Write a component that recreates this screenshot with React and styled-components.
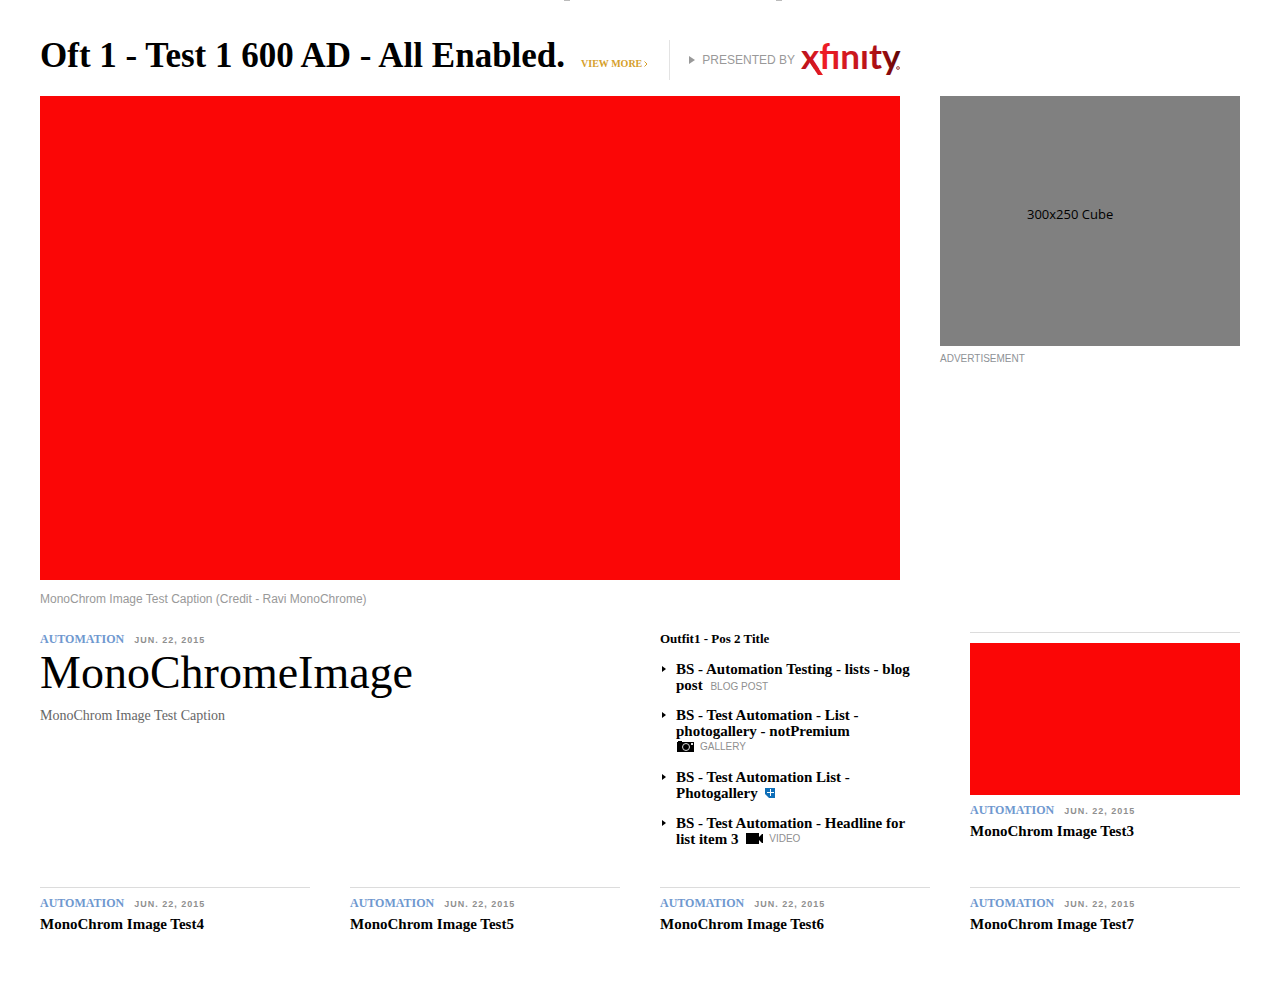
import React from 'react';
import styled, { createGlobalStyle } from 'styled-components';

const serif = 'Georgia, "Liberation Serif", serif';
const sans = 'Arial, "Liberation Sans", sans-serif';

const GlobalStyle = createGlobalStyle`
  *, *::before, *::after { box-sizing: border-box; }
  body { margin: 0; background: #fff; color: #000; font-family: ${serif}; }
  h1, h2, h3, p, ul, figure { margin: 0; padding: 0; }
  ul { list-style: none; }
  a { color: inherit; text-decoration: none; }
  svg { flex: none; }
`;

const Page = styled.div`
  padding: 0 40px 60px;
`;

const TopEdge = styled.div`
  display: flex;
  justify-content: center;
  gap: 206px;
  height: 40px;
  padding-left: 66px;
`;

const EdgeMark = styled.span`
  width: 6px;
  height: 1px;
  background: #bbb;
`;

const Header = styled.header`
  display: flex;
  align-items: center;
  height: 40px;
  margin-bottom: 16px;
  white-space: nowrap;
`;

const TitleGroup = styled.div`
  display: flex;
  align-items: baseline;
  gap: 16px;
  padding: 0 21px 8px 0;
`;

const Title = styled.h1`
  font-size: 35px;
  line-height: 32px;
  font-weight: 700;
`;

const ViewMore = styled.a`
  font-size: 10px;
  font-weight: 700;
  color: #d6a02b;
`;

const Chevron = styled.svg`
  margin-left: 2px;
`;

const Sponsor = styled.a`
  display: flex;
  align-items: center;
  height: 40px;
  padding-left: 19px;
  border-left: 1px solid #e3e3e3;
  font: 12px/14px ${sans};
  color: #999;
`;

const SponsorLabel = styled.span`
  margin: 0 6px 0 7px;
`;

const Logo = styled.svg`
  overflow: visible;
`;

const Lead = styled.section`
  display: grid;
  grid-template-columns: minmax(0, 1fr) 300px;
  gap: 40px;
  align-items: start;
  margin-bottom: 26px;
`;

const Photo = styled.div`
  width: 100%;
  aspect-ratio: ${(p) => p.$ratio};
  background: #fb0606;
`;

const Credit = styled.figcaption`
  margin-top: 12px;
  font: 12px/14px ${sans};
  color: #999;
`;

const AdCube = styled.div`
  height: 250px;
  padding: 109px 0 0 87px;
  background: #808080;
  font: 13px/18px "Open Sans", sans-serif;
`;

const AdLabel = styled.p`
  margin-top: 6px;
  font: 10px/14px ${sans};
  color: #8e9296;
`;

const Grid = styled.section`
  display: grid;
  grid-template-columns: repeat(4, minmax(0, 1fr));
  column-gap: 40px;
`;

const StoryRow = styled(Grid)`
  margin-bottom: 40px;
`;

const Feature = styled.article`
  grid-column: span 2;
`;

const Meta = styled.p`
  display: flex;
  align-items: baseline;
  gap: 10px;
  font-size: 12px;
  line-height: 14px;
  font-weight: 700;
`;

const Category = styled.a`
  color: #6f98cf;
`;

const DateText = styled.time`
  font: 700 9px/14px ${sans};
  letter-spacing: 1px;
  color: #8f8f8f;
`;

const FeatureTitle = styled.h2`
  margin-top: 1px;
  font-size: 46px;
  line-height: 50px;
  font-weight: 400;
`;

const Summary = styled.p`
  margin-top: 10px;
  font-size: 14px;
  line-height: 16px;
  color: #666;
`;

const ListTitle = styled.h2`
  font-size: 13px;
  line-height: 14px;
  margin-bottom: 15px;
`;

const LinkList = styled.ul`
  display: grid;
  gap: 14px;
`;

const Item = styled.li`
  display: flex;
  gap: 10px;
  padding: 0 12px 0 2px;
  font-size: 15px;
  line-height: 16px;
  font-weight: 700;
`;

const ItemArrow = styled.svg`
  margin-top: 5px;
`;

const ItemLink = styled.a`
  padding-right: 3px;
`;

const Tag = styled.span`
  display: inline-flex;
  align-items: center;
  gap: 6px;
  height: 12px;
  margin-left: 1px;
  white-space: nowrap;
  font: 10px/12px ${sans};
  color: #8f8f8f;
`;

const Card = styled.article`
  border-top: 1px solid #dcdcdc;
  padding-top: ${(p) => (p.$photo ? '10px' : '8px')};
`;

const CardPhoto = styled(Photo)`
  margin-bottom: 8px;
`;

const CardTitle = styled.h3`
  margin-top: 5px;
  font-size: 15px;
  line-height: 16px;
`;

function StoryMeta() {
  return (
    <Meta>
      <Category href="#automation">AUTOMATION</Category>
      <DateText dateTime="2015-06-22">JUN. 22, 2015</DateText>
    </Meta>
  );
}

function Story({ title, photo }) {
  return (
    <Card $photo={photo}>
      {photo && <CardPhoto $ratio="270 / 152" role="img" aria-label={title} />}
      <StoryMeta />
      <CardTitle><a href="#story">{title}</a></CardTitle>
    </Card>
  );
}

function XfinityLogo() {
  return (
    <Logo width="104" height="34" viewBox="0 0 104 34" role="img" aria-label="xfinity">
      <defs>
        <linearGradient id="brand" gradientUnits="userSpaceOnUse" x1="0" y1="0" x2="98" y2="0">
          <stop offset="0" stopColor="#b5121b" />
          <stop offset="0.24" stopColor="#ee1c25" />
          <stop offset="0.6" stopColor="#c4161c" />
          <stop offset="0.82" stopColor="#a50d12" />
          <stop offset="1" stopColor="#5e0507" />
        </linearGradient>
      </defs>
      <text x="0" y="26" fontFamily="Lato, sans-serif" fontSize="35" fontWeight="700" fill="url(#brand)">xfınıty</text>
      <path d="M7 17H12L22 32H17Z" fill="url(#brand)" />
      <circle cx="97" cy="25" r="1.5" fill="#e3b5b5" stroke="#a86060" strokeWidth="1" />
    </Logo>
  );
}

function CameraIcon() {
  return (
    <svg width="17" height="11" viewBox="0 0 17 11" aria-hidden="true">
      <path d="M0 1H1V0H5V1H17V11H0Z" fill="#000" />
      <circle cx="9" cy="6" r="3.5" fill="none" stroke="#ddd" />
      <path d="M14 2H16V4H14Z" fill="#ddd" />
    </svg>
  );
}

function VideoIcon() {
  return (
    <svg width="17" height="11" viewBox="0 0 17 11" aria-hidden="true">
      <path d="M0 0H13V4L16 1H17V10H16L13 7V11H0Z" fill="#000" />
    </svg>
  );
}

function PremiumIcon() {
  return (
    <svg width="10" height="10" viewBox="0 0 10 10" aria-hidden="true">
      <path d="M0 0H10V10H4L0 6Z" fill="#0f6fb8" />
      <path d="M5.5 1V8M2 4.5H9" stroke="#fff" />
    </svg>
  );
}

const items = [
  { text: 'BS - Automation Testing - lists - blog post', kind: 'BLOG POST' },
  { text: 'BS - Test Automation - List - photogallery - notPremium', kind: 'GALLERY', Icon: CameraIcon },
  { text: 'BS - Test Automation List - Photogallery', Icon: PremiumIcon },
  { text: 'BS - Test Automation - Headline for list item 3', kind: 'VIDEO', Icon: VideoIcon },
];

export default function App() {
  return (
    <>
      <GlobalStyle />
      <Page>
        <TopEdge aria-hidden="true">
          <EdgeMark />
          <EdgeMark />
        </TopEdge>
        <Header>
          <TitleGroup>
            <Title>Oft 1 - Test 1 600 AD - All Enabled.</Title>
            <ViewMore href="#more">
              VIEW MORE
              <Chevron width="4" height="6" viewBox="0 0 4 6" aria-hidden="true">
                <path d="M0.5 0.5L3 3L0.5 5.5" fill="none" stroke="#d6a02b" />
              </Chevron>
            </ViewMore>
          </TitleGroup>
          <Sponsor href="#sponsor">
            <svg width="6" height="8" viewBox="0 0 6 8" aria-hidden="true">
              <path d="M0 0L6 4L0 8Z" fill="#999" />
            </svg>
            <SponsorLabel>PRESENTED BY</SponsorLabel>
            <XfinityLogo />
          </Sponsor>
        </Header>

        <Lead>
          <figure>
            <Photo $ratio="860 / 484" role="img" aria-label="MonoChromeImage" />
            <Credit>MonoChrom Image Test Caption (Credit - Ravi MonoChrome)</Credit>
          </figure>
          <aside>
            <AdCube>300x250 Cube</AdCube>
            <AdLabel>ADVERTISEMENT</AdLabel>
          </aside>
        </Lead>

        <StoryRow>
          <Feature>
            <StoryMeta />
            <FeatureTitle><a href="#story">MonoChromeImage</a></FeatureTitle>
            <Summary>MonoChrom Image Test Caption</Summary>
          </Feature>
          <div>
            <ListTitle>Outfit1 - Pos 2 Title</ListTitle>
            <LinkList>
              {items.map(({ text, kind, Icon }) => (
                <Item key={text}>
                  <ItemArrow width="4" height="6" viewBox="0 0 4 6" aria-hidden="true">
                    <path d="M0 0L4 3L0 6Z" fill="#000" />
                  </ItemArrow>
                  <div>
                    <ItemLink href="#story">{text}</ItemLink>{' '}
                    <Tag>
                      {Icon && <Icon />}
                      {kind}
                    </Tag>
                  </div>
                </Item>
              ))}
            </LinkList>
          </div>
          <Story title="MonoChrom Image Test3" photo />
        </StoryRow>

        <Grid>
          <Story title="MonoChrom Image Test4" />
          <Story title="MonoChrom Image Test5" />
          <Story title="MonoChrom Image Test6" />
          <Story title="MonoChrom Image Test7" />
        </Grid>
      </Page>
    </>
  );
}
